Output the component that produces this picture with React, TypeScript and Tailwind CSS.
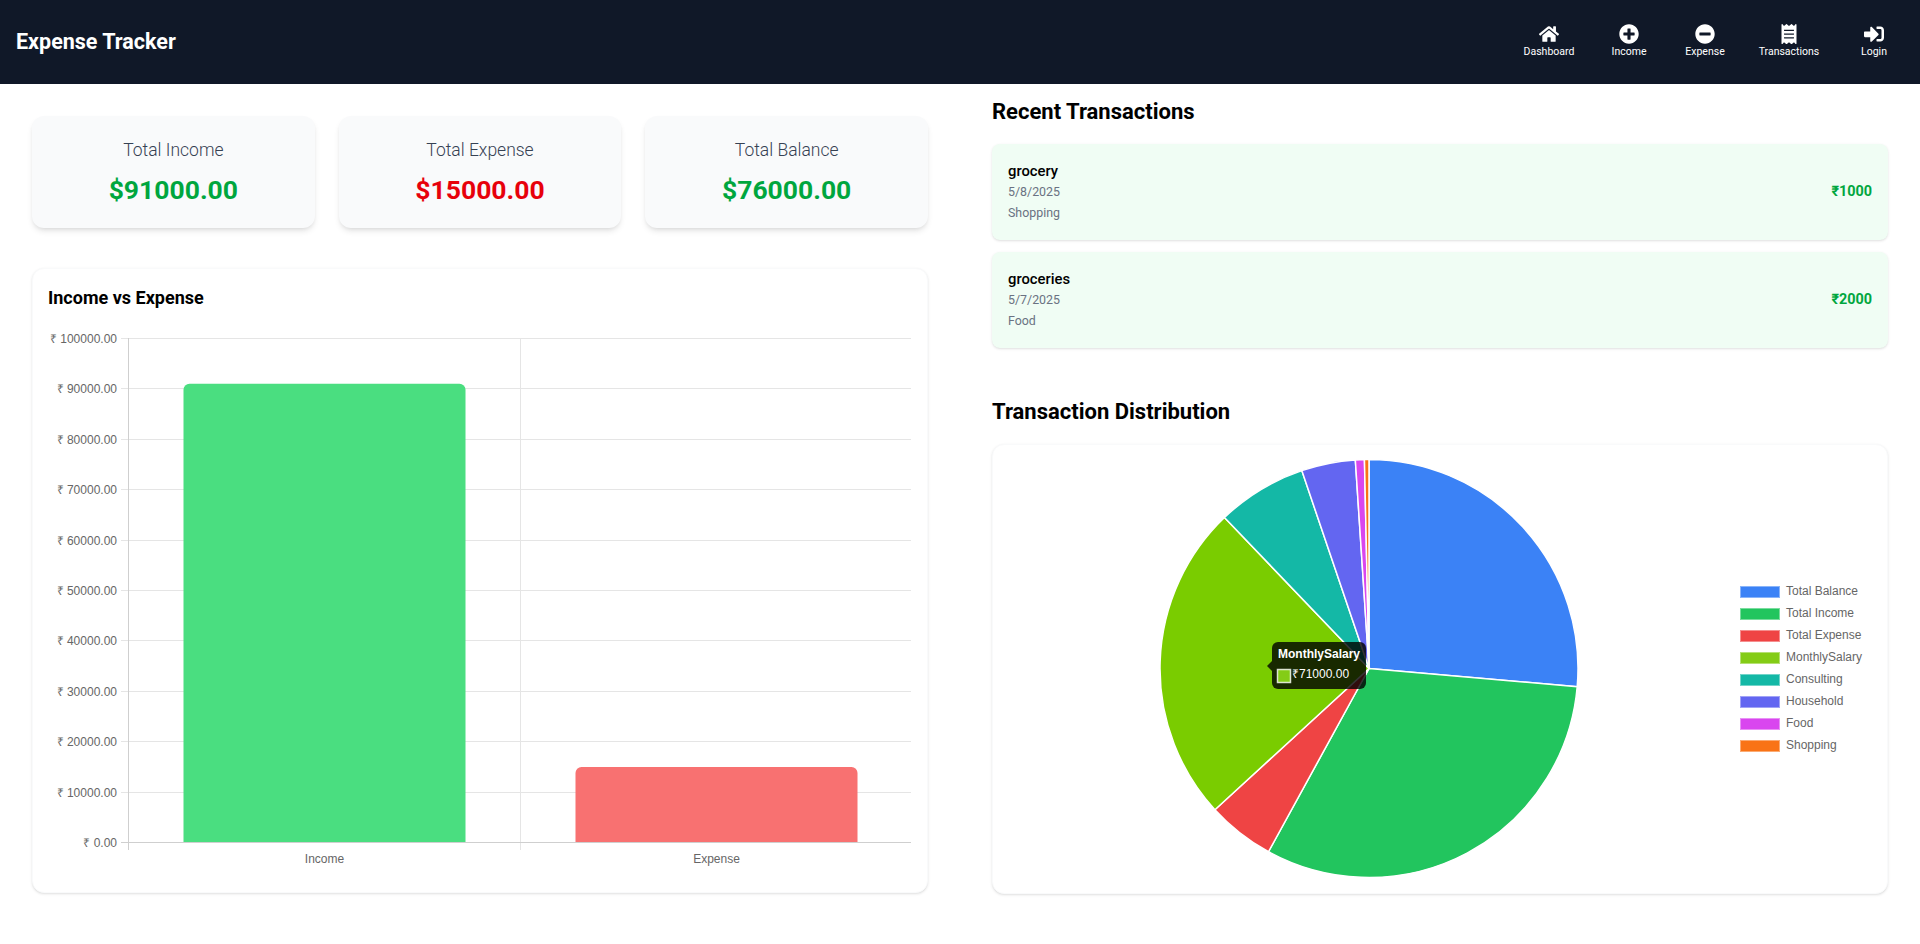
import React from "react";
import {
  FaHome,
  FaPlusCircle,
  FaMinusCircle,
  FaReceipt,
  FaSignInAlt,
} from "react-icons/fa";

const navItems = [
  { label: "Dashboard", icon: FaHome, width: "w-[80px]" },
  { label: "Income", icon: FaPlusCircle, width: "w-[80px]" },
  { label: "Expense", icon: FaMinusCircle, width: "w-[72px]" },
  { label: "Transactions", icon: FaReceipt, width: "w-[96px]" },
  { label: "Login", icon: FaSignInAlt, width: "w-[74px]" },
];

const stats = [
  { label: "Total Income", value: "$91000.00", color: "text-green-600" },
  { label: "Total Expense", value: "$15000.00", color: "text-red-600" },
  { label: "Total Balance", value: "$76000.00", color: "text-green-600" },
];

const transactions = [
  { title: "grocery", date: "5/8/2025", category: "Shopping", amount: "₹1000" },
  { title: "groceries", date: "5/7/2025", category: "Food", amount: "₹2000" },
];

const slices = [
  { label: "Total Balance", value: 76000, color: "#3b82f6" },
  { label: "Total Income", value: 91000, color: "#22c55e" },
  { label: "Total Expense", value: 15000, color: "#ef4444" },
  { label: "MonthlySalary", value: 71000, color: "#84cc16", hover: "#7acc00" },
  { label: "Consulting", value: 20000, color: "#14b8a6" },
  { label: "Household", value: 12000, color: "#6366f1" },
  { label: "Food", value: 2000, color: "#d946ef" },
  { label: "Shopping", value: 1000, color: "#f97316" },
];

const chartFont = "'Liberation Sans', Arial, sans-serif";

const BarChart = () => {
  const left = 80.5;
  const right = 863;
  const bottom = 514.5;
  const step = 50.4;
  const ticks = Array.from({ length: 11 }, (_, i) => i);
  const columns = [left, 472.5];
  const bars = [
    { label: "Income", value: 91000, x: 135.5, color: "#4ade80" },
    { label: "Expense", value: 15000, x: 527.5, color: "#f87171" },
  ];

  return (
    <svg width={864} height={549} className="block" fontFamily={chartFont}>
      {ticks.map((i) => {
        const y = Math.floor(bottom - i * step) + 0.5;
        return (
          <g key={i}>
            <line x1={73} x2={right} y1={y} y2={y} stroke="#e5e5e5" />
            <text
              x={69}
              y={y + 1}
              textAnchor="end"
              dominantBaseline="middle"
              fontSize={12}
              fill="#666"
            >
              ₹ {(i * 10000).toFixed(2)}
            </text>
          </g>
        );
      })}
      {columns.map((x, i) => (
        <line
          key={x}
          x1={x}
          x2={x}
          y1={10}
          y2={522}
          stroke={i === 0 ? "#cfcfcf" : "#e5e5e5"}
        />
      ))}
      {bars.map((bar) => {
        const top = bottom - (bar.value / 10000) * step;
        return (
          <g key={bar.label}>
            <path
              d={`M${bar.x} ${bottom}V${top + 6}a6 6 0 0 1 6 -6H${bar.x + 276}a6 6 0 0 1 6 6V${bottom}Z`}
              fill={bar.color}
            />
            <text
              x={bar.x + 141}
              y={532}
              textAnchor="middle"
              dominantBaseline="middle"
              fontSize={12}
              fill="#666"
            >
              {bar.label}
            </text>
          </g>
        );
      })}
      <line x1={73} x2={right} y1={514.5} y2={514.5} stroke="#cfcfcf" />
    </svg>
  );
};

const PieChart = () => {
  const cx = 361;
  const cy = 208.5;
  const r = 209;
  const total = slices.reduce((sum, s) => sum + s.value, 0);
  let angle = -Math.PI / 2;

  return (
    <svg width={864} height={418} className="block overflow-visible" fontFamily={chartFont}>
      {slices.map((s) => {
        const end = angle + (s.value / total) * Math.PI * 2;
        const large = end - angle > Math.PI ? 1 : 0;
        const d = `M${cx} ${cy}L${cx + r * Math.cos(angle)} ${cy + r * Math.sin(angle)}A${r} ${r} 0 ${large} 1 ${cx + r * Math.cos(end)} ${cy + r * Math.sin(end)}Z`;
        angle = end;
        return (
          <path
            key={s.label}
            d={d}
            fill={s.hover ?? s.color}
            stroke="#fff"
            strokeWidth={1.5}
          />
        );
      })}

      {slices.map((s, i) => (
        <g key={s.label}>
          <rect x={732} y={126 + i * 22} width={40} height={12} fill={s.color} />
          <rect
            x={732.5}
            y={126.5 + i * 22}
            width={39}
            height={11}
            fill="none"
            stroke="#fff"
            strokeOpacity={0.4}
          />
          <text
            x={778}
            y={132 + i * 22}
            dominantBaseline="middle"
            fontSize={12}
            fill="#666"
          >
            {s.label}
          </text>
        </g>
      ))}

      {/* tooltip */}
      <path d="M264 201L259 206L264 211Z" fill="#000" fillOpacity={0.8} />
      <rect x={264} y={182} width={94} height={47} rx={6} fill="#000" fillOpacity={0.8} />
      <text x={270} y={195} dominantBaseline="middle" fontSize={12} fontWeight={700} fill="#fff">
        MonthlySalary
      </text>
      <rect x={269.5} y={209.5} width={13} height={13} fill="#84cc16" stroke="#fff" strokeOpacity={0.8} strokeWidth={1.5} />
      <text x={284} y={215} dominantBaseline="middle" fontSize={12} fill="#fff">
        ₹71000.00
      </text>
    </svg>
  );
};

const App = () => {
  return (
    <div className="min-h-screen bg-white font-['Roboto',sans-serif]">
      <header className="h-[84px] bg-gray-900 text-white flex items-center justify-between pl-4 pr-[9px]">
        <h1 className="text-[21.5px] font-bold">Expense Tracker</h1>
        <nav className="flex">
          {navItems.map(({ label, icon: Icon, width }) => (
            <a key={label} className={`${width} flex flex-col items-center`}>
              <Icon size={20} />
              <span className="text-[10.5px] leading-4">{label}</span>
            </a>
          ))}
        </nav>
      </header>

      <main className="grid grid-cols-2">
        <section className="p-8">
          <div className="grid grid-cols-3 gap-6 mb-10">
            {stats.map((s) => (
              <div key={s.label} className="bg-gray-50 rounded-xl shadow-md p-5 text-center">
                <p className="text-[17.5px] leading-7 font-light text-gray-700">{s.label}</p>
                <p className={`text-[26.5px] leading-9 mt-2 font-bold ${s.color}`}>{s.value}</p>
              </div>
            ))}
          </div>
          <div className="bg-white rounded-xl shadow border border-gray-50 p-4 h-[625px]">
            <h2 className="text-[18px] leading-7 font-bold mb-4 -mt-px -ml-px">Income vs Expense</h2>
            <div className="-ml-px">
              <BarChart />
            </div>
          </div>
        </section>

        <section className="px-8 pt-3">
          <h2 className="text-[22px] leading-8 font-bold mb-4">Recent Transactions</h2>
          <div className="flex flex-col gap-3">
            {transactions.map((t) => (
              <div key={t.title} className="bg-green-50 rounded-lg shadow p-4 flex items-center justify-between h-24">
                <div>
                  <p className="text-[14.8px] leading-5 font-medium">{t.title}</p>
                  <p className="text-[12.4px] leading-5 mt-px text-gray-500">{t.date}</p>
                  <p className="text-[12.4px] leading-5 mt-px text-gray-500">{t.category}</p>
                </div>
                <p className="text-[14.4px] font-bold text-green-600">{t.amount}</p>
              </div>
            ))}
          </div>
          <h2 className="text-[22px] leading-8 font-bold mt-12 mb-4">Transaction Distribution</h2>
          <div className="bg-white rounded-xl shadow border border-gray-50 p-4 h-[450px]">
            <div className="-mt-px -ml-px">
              <PieChart />
            </div>
          </div>
        </section>
      </main>
    </div>
  );
};

export default App;
